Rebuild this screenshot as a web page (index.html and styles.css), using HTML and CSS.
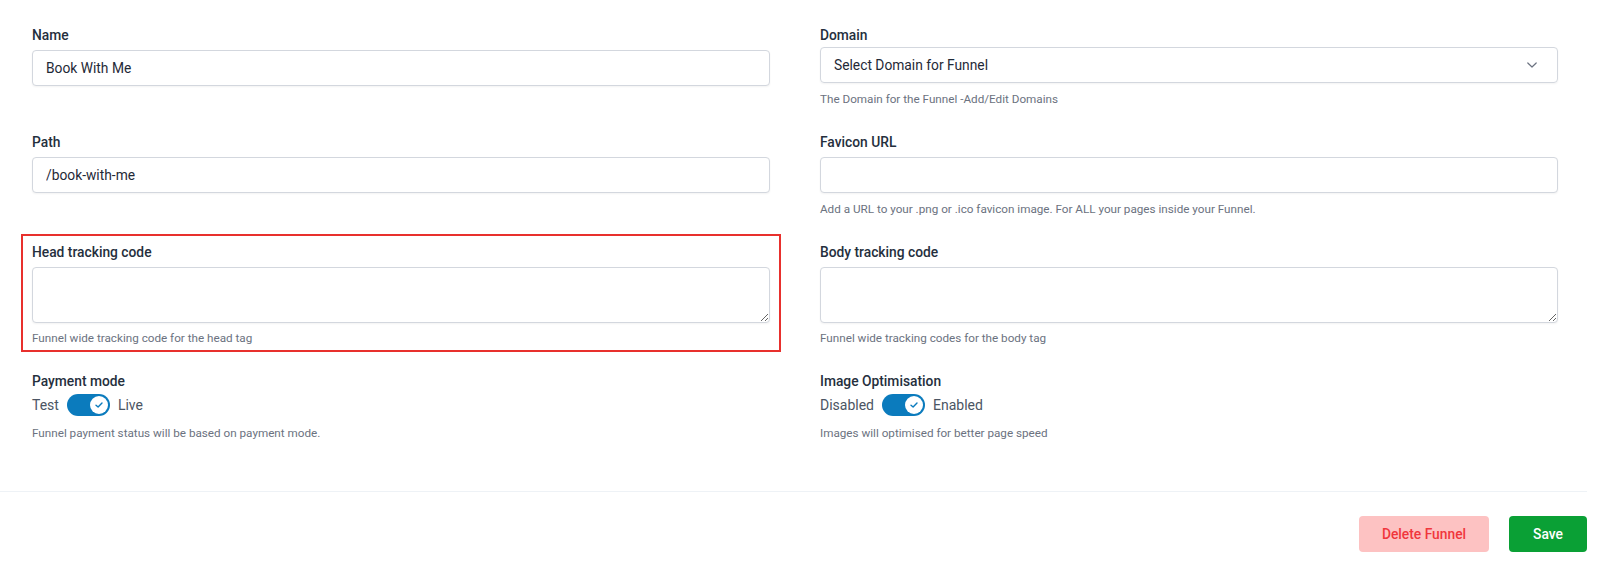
FILE: index.html
```html
<!DOCTYPE html>
<html lang="en">
<head>
<meta charset="utf-8">
<title>Funnel Settings</title>
<link rel="stylesheet" href="styles.css">
</head>
<body>
<div class="page">
  <form class="settings">
    <div class="field">
      <label class="label">Name</label>
      <input class="control" type="text" value="Book With Me">
    </div>
    <div class="field">
      <label class="label label-tight">Domain</label>
      <div class="select">
        <span>Select Domain for Funnel</span>
        <svg class="chev" width="12" height="8" viewBox="0 0 12 8"><path d="M1.8 2 L6 6 L10.2 2" fill="none" stroke="#6b7280" stroke-width="1.2" stroke-linecap="round" stroke-linejoin="round"/></svg>
      </div>
      <p class="help">The Domain for the Funnel -Add/Edit Domains</p>
    </div>

    <div class="field">
      <label class="label">Path</label>
      <input class="control" type="text" value="/book-with-me">
    </div>
    <div class="field">
      <label class="label">Favicon URL</label>
      <input class="control" type="text" value="">
      <p class="help">Add a URL to your .png or .ico favicon image. For ALL your pages inside your Funnel.</p>
    </div>

    <div class="field highlighted">
      <label class="label">Head tracking code</label>
      <textarea class="control area"></textarea>
      <p class="help help-tight">Funnel wide tracking code for the head tag</p>
    </div>
    <div class="field">
      <label class="label">Body tracking code</label>
      <textarea class="control area"></textarea>
      <p class="help help-tight">Funnel wide tracking codes for the body tag</p>
    </div>

    <div class="field">
      <label class="label">Payment mode</label>
      <div class="switch-row">
        <span>Test</span>
        <span class="switch"><span class="knob"><svg width="10" height="8" viewBox="0 0 10 8"><path d="M2 4.2 L4.1 6 L8 2" fill="none" stroke="#0b7bbd" stroke-width="1.4" stroke-linecap="round" stroke-linejoin="round"/></svg></span></span>
        <span>Live</span>
      </div>
      <p class="help help-wide">Funnel payment status will be based on payment mode.</p>
    </div>
    <div class="field">
      <label class="label">Image Optimisation</label>
      <div class="switch-row">
        <span>Disabled</span>
        <span class="switch"><span class="knob"><svg width="10" height="8" viewBox="0 0 10 8"><path d="M2 4.2 L4.1 6 L8 2" fill="none" stroke="#0b7bbd" stroke-width="1.4" stroke-linecap="round" stroke-linejoin="round"/></svg></span></span>
        <span>Enabled</span>
      </div>
      <p class="help help-wide">Images will optimised for better page speed</p>
    </div>
  </form>

  <div class="footer">
    <button class="btn btn-delete" type="button">Delete Funnel</button>
    <button class="btn btn-save" type="button">Save</button>
  </div>
</div>
</body>
</html>
```

FILE: styles.css
```css
* { box-sizing: border-box; }

html, body {
  margin: 0;
  padding: 0;
  background: #ffffff;
  font-family: Roboto, "Liberation Sans", Arial, sans-serif;
  color: #1f2937;
}

.page {
  width: 1600px;
  height: 578px;
  overflow: hidden;
}

.settings {
  display: grid;
  grid-template-columns: 738px 738px;
  column-gap: 50px;
  row-gap: 25px;
  padding: 25px 0 0 32px;
  align-items: start;
}

.field {
  display: flex;
  flex-direction: column;
  position: relative;
}

.label {
  font-size: 13.8px;
  line-height: 20px;
  font-weight: 500;
  color: #252f3d;
  margin-bottom: 5px;
}

.label-tight { margin-bottom: 2px; }

.control {
  width: 100%;
  height: 36px;
  border: 1px solid #d3d7de;
  border-radius: 4px;
  padding: 0 13px;
  font-family: inherit;
  font-size: 13.8px;
  color: #1f2937;
  background: #fff;
  box-shadow: 0 1px 2px rgba(0, 0, 0, 0.05);
  outline: none;
  margin: 0;
}

.area {
  height: 56px;
  resize: vertical;
  padding: 8px 13px;
  display: block;
}

.select {
  height: 36px;
  border: 1px solid #d3d7de;
  border-radius: 4px;
  padding: 0 13px;
  display: flex;
  align-items: center;
  justify-content: space-between;
  font-size: 13.8px;
  color: #1f2937;
  box-shadow: 0 1px 2px rgba(0, 0, 0, 0.05);
}

.chev { margin-right: 6px; }

.help {
  margin: 8px 0 0 0;
  font-size: 11.7px;
  line-height: 16px;
  color: #6b7280;
}

.help-tight { margin-top: 7px; }
.help-wide { margin-top: 9px; }

.highlighted::before {
  content: "";
  position: absolute;
  top: -8px;
  bottom: -6px;
  left: -11px;
  right: -11px;
  border: 2px solid #e8302d;
  pointer-events: none;
}

.switch-row {
  display: flex;
  align-items: center;
  gap: 8px;
  height: 22px;
  margin-top: -2px;
  font-size: 14px;
  color: #4b5563;
}

.switch {
  width: 43px;
  height: 22px;
  border-radius: 11px;
  background: #0b7bbd;
  display: flex;
  align-items: center;
  justify-content: flex-end;
  padding: 2px;
}

.knob {
  width: 18px;
  height: 18px;
  border-radius: 50%;
  background: #fff;
  display: flex;
  align-items: center;
  justify-content: center;
}

.footer {
  width: 1587px;
  margin-top: 50px;
  border-top: 1px solid #eef2f6;
  padding-top: 24px;
  display: flex;
  justify-content: flex-end;
  gap: 20px;
}

.btn {
  height: 36px;
  border: none;
  border-radius: 4px;
  font-family: inherit;
  font-size: 13.8px;
  font-weight: 500;
  cursor: pointer;
}

.btn-delete {
  width: 130px;
  background: #fdc2c2;
  color: #f0363c;
}

.btn-save {
  width: 78px;
  background: #0aa035;
  color: #ffffff;
}
```
